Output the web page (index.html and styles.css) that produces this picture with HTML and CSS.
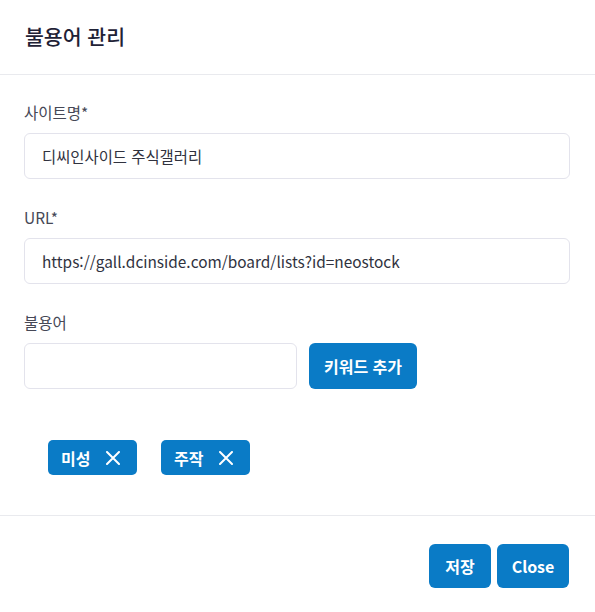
FILE: index.html
```html
<!DOCTYPE html>
<html lang="ko">
<head>
<meta charset="utf-8">
<title>불용어 관리</title>
<link rel="stylesheet" href="styles.css">
</head>
<body>
<div class="modal">
  <header class="modal-header">
    <h1 class="modal-title">불용어 관리</h1>
  </header>
  <main class="modal-body">
    <div class="field">
      <label class="field-label">사이트명*</label>
      <div class="input">디씨인사이드 주식갤러리</div>
    </div>
    <div class="field">
      <label class="field-label">URL*</label>
      <div class="input">https://gall.dcinside.com/board/lists?id=neostock</div>
    </div>
    <div class="field">
      <label class="field-label">불용어</label>
      <div class="keyword-row">
        <div class="input input-short"></div>
        <button class="btn btn-add">키워드 추가</button>
      </div>
    </div>
    <div class="tags">
      <span class="tag">미성<svg class="tag-x" viewBox="0 0 14 14" width="14" height="14"><path d="M1 1L13 13M13 1L1 13" stroke="#fff" stroke-width="2" fill="none" stroke-linecap="round"/></svg></span>
      <span class="tag">주작<svg class="tag-x" viewBox="0 0 14 14" width="14" height="14"><path d="M1 1L13 13M13 1L1 13" stroke="#fff" stroke-width="2" fill="none" stroke-linecap="round"/></svg></span>
    </div>
  </main>
  <footer class="modal-footer">
    <button class="btn btn-footer btn-save">저장</button>
    <button class="btn btn-footer btn-close">Close</button>
  </footer>
</div>
</body>
</html>
```
FILE: styles.css
```css
* { box-sizing: border-box; }
html, body { margin: 0; padding: 0; background: #fff; }
body {
  font-family: "Noto Sans CJK KR", "Noto Sans", sans-serif;
  color: #2c2f3a;
}
.modal { width: 595px; display: flex; flex-direction: column; }
.modal-header {
  height: 75px;
  border-bottom: 1px solid #e9eaee;
  display: flex;
  align-items: center;
  padding: 0 25px;
}
.modal-title {
  margin: 0;
  font-size: 20.5px;
  font-weight: 500;
  line-height: 30px;
  color: #1f2236;
  position: relative;
  top: -1px;
}
.modal-body {
  padding: 26px 25px 40px 24px;
  display: flex;
  flex-direction: column;
}
.field { display: flex; flex-direction: column; margin-bottom: 27px; }
.field:nth-child(3) { margin-bottom: 0; }
.field-label {
  font-size: 15.5px;
  line-height: 22px;
  color: #464856;
  margin-bottom: 10px;
}
.input {
  height: 46px;
  border: 1px solid #e3e3ec;
  border-radius: 6px;
  padding: 0 17px;
  display: flex;
  align-items: center;
  font-size: 15.4px;
  color: #30323e;
}
.keyword-row { display: flex; gap: 12px; }
.input-short { width: 273px; }
.btn {
  border: none;
  background: #0a7bc6;
  color: #fff;
  font-family: inherit;
  font-weight: 700;
  font-size: 16px;
  border-radius: 6px;
  cursor: pointer;
}
.btn-add { width: 108px; height: 46px; padding: 0; }
.tags {
  display: flex;
  gap: 24px;
  padding-left: 24px;
  margin-top: 51px;
}
.tag {
  width: 89px;
  height: 35px;
  display: inline-flex;
  align-items: center;
  gap: 16px;
  padding: 0 0 0 13px;
  background: #0a7bc6;
  color: #fff;
  font-weight: 700;
  font-size: 16px;
  border-radius: 5px;
}
.modal-footer {
  border-top: 1px solid #e9eaee;
  padding: 28px 26px 24px;
  display: flex;
  justify-content: flex-end;
  gap: 6px;
}
.btn-footer { height: 44px; padding: 0; }
.btn-save { width: 62px; }
.btn-close { width: 72px; }
```
